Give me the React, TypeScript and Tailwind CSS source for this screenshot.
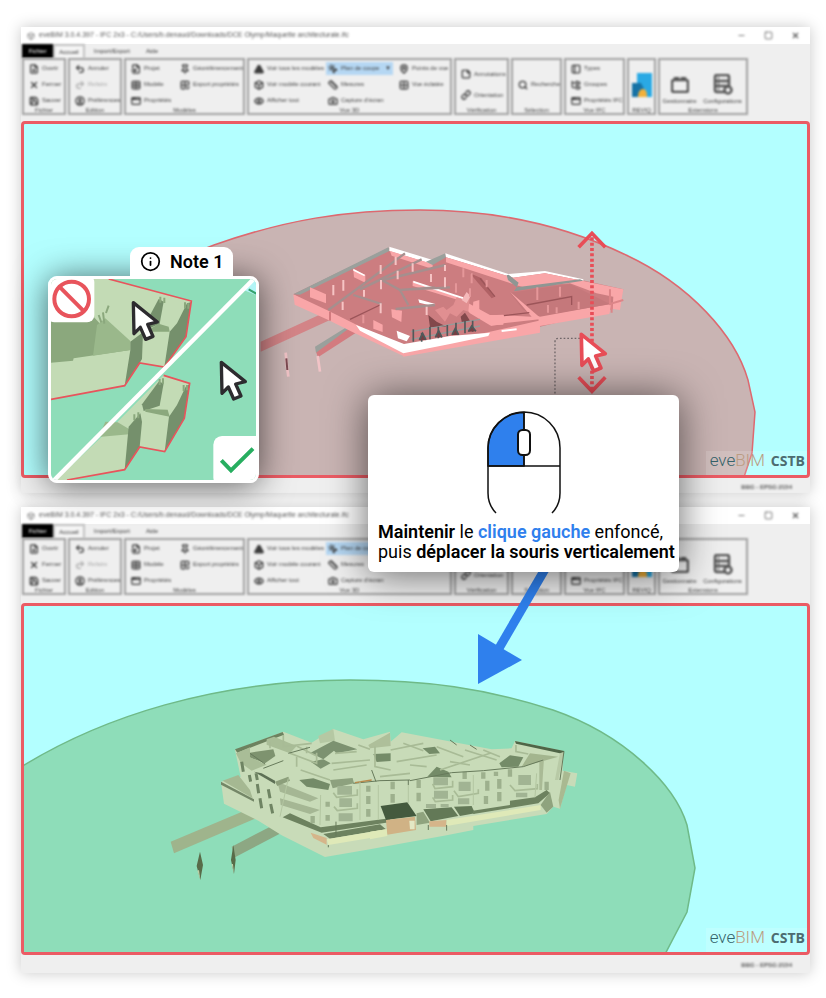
import type { ReactNode } from "react";
import {
  AppWindow, Box, Camera, CircleUser, Eye, FileInput, FilePlus, FolderTree, Info, Link,
  MapPin, Minus, MousePointerClick, PanelLeft, Redo2, Ruler, Save, Search, Square, StickyNote,
  Table, Triangle, Undo2, X, Grid2x2, Pin, Grid2x2Check,
} from "lucide-react";
import type { LucideIcon } from "lucide-react";

type Tool = { icon: LucideIcon; text: string; active?: boolean; muted?: boolean; solid?: boolean };
type Group = { name: string; width: string; columns: { width: string; tools: Tool[] }[] };

const groups: Group[] = [
  {
    name: "Fichier", width: "w-[44px]",
    columns: [{ width: "w-[37px]", tools: [{ icon: FilePlus, text: "Ouvrir" }, { icon: X, text: "Fermer" }, { icon: Save, text: "Sauver" }] }],
  },
  {
    name: "Edition", width: "w-[54px]",
    columns: [{ width: "w-[47px]", tools: [{ icon: Undo2, text: "Annuler" }, { icon: Redo2, text: "Refaire", muted: true }, { icon: CircleUser, text: "Préférences" }] }],
  },
  {
    name: "Modèles", width: "w-[121px]",
    columns: [
      { width: "w-[45px]", tools: [{ icon: FileInput, text: "Projet" }, { icon: Table, text: "Modèle" }, { icon: AppWindow, text: "Propriétés" }] },
      { width: "w-[65px]", tools: [{ icon: Pin, text: "Géoréférencement" }, { icon: Grid2x2Check, text: "Export propriétés" }] },
    ],
  },
  {
    name: "Vue 3D", width: "w-[205px]",
    columns: [
      { width: "w-[70px]", tools: [{ icon: Triangle, text: "Voir tous les modèles", solid: true }, { icon: Box, text: "Voir modèle courant" }, { icon: Eye, text: "Afficher tout" }] },
      { width: "w-[67px]", tools: [{ icon: MousePointerClick, text: "Plan de coupe", active: true }, { icon: Ruler, text: "Mesures" }, { icon: Camera, text: "Capture d'écran" }] },
      { width: "w-[52px]", tools: [{ icon: MapPin, text: "Points de vue" }, { icon: Grid2x2, text: "Vue éclatée" }] },
    ],
  },
  {
    name: "Vérification", width: "w-[55px]",
    columns: [{ width: "w-[48px]", tools: [{ icon: StickyNote, text: "Annotations" }, { icon: Link, text: "Orientation" }] }],
  },
  { name: "Sélection", width: "w-[51px]", columns: [{ width: "w-[44px]", tools: [{ icon: Search, text: "Recherche" }] }] },
  {
    name: "Vue IFC", width: "w-[61px]",
    columns: [{ width: "w-[54px]", tools: [{ icon: PanelLeft, text: "Types" }, { icon: FolderTree, text: "Groupes" }, { icon: AppWindow, text: "Propriétés IFC" }] }],
  },
];

function GroupFrame({ name, width, children }: { name: string; width: string; children: ReactNode }) {
  return (
    <section className={`${width} flex shrink-0 flex-col border-2 border-[#a2a2a2]`} aria-label={name}>
      <div className="flex h-[47px] gap-1 pt-[2px] pl-[3px]">{children}</div>
      <div className="text-center leading-[6px]">{name}</div>
    </section>
  );
}

function ToolButton({ icon: Icon, text, active, muted, solid }: Tool) {
  return (
    <button
      type="button"
      className={`flex h-[13px] w-full shrink-0 items-center gap-[3px] pl-[2px] text-left whitespace-nowrap ${active ? "bg-[#b5d7f3]" : ""} ${muted ? "text-[#aaaaaa]" : ""}`}
    >
      <Icon className="size-[10px] shrink-0" strokeWidth={3} fill={solid ? "currentColor" : "none"} />
      {text}
      {active && <span className="ml-auto pr-[2px]">▼</span>}
    </button>
  );
}

function Ribbon() {
  return (
    <div className="flex h-[57px] gap-[2px] pl-px text-[6px] text-[#3c3c3c] blur-[1px]">
      {groups.map((g) => (
        <GroupFrame key={g.name} name={g.name} width={g.width}>
          {g.columns.map((c, i) => (
            <div
              key={i}
              className={`${c.width} flex shrink-0 flex-col ${c.tools.length === 1 ? "justify-center" : c.tools.length === 2 && g.columns.length === 1 ? "justify-center gap-2" : "gap-[3px]"}`}
            >
              {c.tools.map((t) => <ToolButton key={t.text} {...t} />)}
            </div>
          ))}
        </GroupFrame>
      ))}
      <GroupFrame name="REVIQ" width="w-[29px]">
        <button type="button" aria-label="REVIQ" className="flex w-5 items-center">
          <svg viewBox="0 0 20 24" className="h-6 w-5">
            <path d="M5 0h15v24H5z" fill="#2aa9e4" />
            <path d="M0 10h9l3 6v8H0z" fill="#1672a5" />
            <path d="M6 24c0-5 2-8 5-8s4 3 4 8z" fill="#f3b13a" />
          </svg>
        </button>
      </GroupFrame>
      <GroupFrame name="Extensions" width="w-[90px]">
        <button type="button" className="flex w-[33px] flex-col items-center justify-end gap-1 whitespace-nowrap">
          <svg viewBox="0 0 18 16" className="h-4 w-[18px]" fill="none" stroke="#555" strokeWidth="2.500">
            <rect x="1" y="3" width="16" height="12" rx="2" />
            <path d="M4 3V1h3v2M11 3V1h3v2" />
          </svg>
          <span className="h-[10px]">Gestionnaire</span>
        </button>
        <button type="button" className="flex w-[45px] flex-col items-center justify-end gap-[2px] whitespace-nowrap">
          <svg viewBox="0 0 20 21" className="h-[21px] w-5" fill="none" stroke="#555" strokeWidth="2.500">
            <rect x="2" y="1" width="14" height="17" rx="2" />
            <path d="M2 7h14M2 12h14M5 4h1M5 9.500h1M5 15h1" />
            <circle cx="15" cy="16" r="3.500" fill="#efefef" />
          </svg>
          <span className="h-[10px]">Configurations</span>
        </button>
      </GroupFrame>
    </div>
  );
}

function AppFrame({ tall, children }: { tall?: boolean; children: ReactNode }) {
  return (
    <section className="bg-[#efefef] shadow-[0_0_14px_rgba(0,0,0,0.22)]">
      <header className="flex h-[17px] items-center bg-white px-[6px] text-[7px] text-[#555555]">
        <div className="flex flex-1 items-center gap-1 blur-[1px]">
          <Box className="size-2" />
          <span>eveBIM 3.0.4.397 - IFC 2x3 - C:/Users/b.denaud/Downloads/DCE Olymp/Maquette architecturale.ifc</span>
        </div>
        <div className="flex items-center gap-[18px] pr-1 blur-[1px]">
          <button type="button" aria-label="Réduire"><Minus className="size-[9px]" /></button>
          <button type="button" aria-label="Agrandir"><Square className="size-[9px]" /></button>
          <button type="button" aria-label="Fermer"><X className="size-[9px]" strokeWidth={3} /></button>
        </div>
      </header>
      <nav className="flex h-[14px] pl-px text-[6px] text-[#333333] blur-[1px]">
        <button type="button" className="w-[31px] bg-black text-white">Fichier</button>
        <button type="button" className="w-[32px] border-2 border-b-0 border-[#c2c2c2] bg-[#f5f5f5]">Accueil</button>
        <button type="button" className="w-[54px]">Import/Export</button>
        <button type="button" className="w-[26px]">Aide</button>
      </nav>
      <div className={tall ? "pb-2" : "pb-[6px]"}>
        <Ribbon />
      </div>
      <div className="relative rounded-sm border-3 border-[#eb5b64] bg-[#b3ffff]">
        {children}
        <div className="absolute right-0 bottom-0 flex h-[24px] items-center gap-[6px] bg-white/15 pr-[2px] pb-1 pl-1">
          <span className="font-['Roboto'] text-[17px] font-light text-[#35636b]">
            eve<span className="text-[#bb9c82]">BIM</span>
          </span>
          <span className="font-['Open_Sans'] text-sm font-bold text-[#4d6c70]">CSTB</span>
        </div>
      </div>
      <footer className={`${tall ? "h-[18px]" : "h-[15px]"} flex items-center justify-end pr-[18px] pt-[3px] text-[6px] font-bold text-[#555555]`}>
        <span className="blur-[1px]">BBG - EPSG:2154</span>
      </footer>
    </section>
  );
}

const CURSOR = "M0 0L72 58L43 65L59 101L37 110L21 74L2 93Z";

type Shape = [fill: string, points: string];

function Shapes({ items }: { items: Shape[] }) {
  return <>{items.map(([fill, points], i) => <polygon key={i} fill={fill} points={points} />)}</>;
}

const sectionWalls: Shape[] = [
  ["#d38487", "32,425 235,332 240,360 32,455"],
  ["#d37b7f", "198,455 312,372 318,398 204,472"],
  ["#9aa09c", "195,440 300,375 315,372 198,458"],
  ["#cc7d80", "130,283 420,142 548,188 588,162 775,228 885,216 1120,268 1100,325 870,380 460,455 300,380"],
  ["#f9a6a8", "130,283 235,332 315,372 460,440 460,468 315,400 235,360 134,314"],
  ["#f9a6a8", "455,440 700,400 866,362 865,348 1085,312 1078,342 870,378 870,398 460,470"],
  ["#ffffff", "318,375 462,432 600,408 720,398 715,408 600,432 460,460 330,392"],
  ["#9aa09c", "130,283 415,142 420,152 150,284"],
  ["#ffffff", "418,140 548,180 548,193 418,153"],
  ["#f9a6a8", "420,153 548,192 548,207 425,167"],
  ["#9aa09c", "528,185 586,160 588,172 548,195"],
  ["#ffffff", "586,160 775,222 885,213 1000,238 1000,243 885,220 790,233 588,172"],
  ["#f9a6a8", "588,172 790,233 885,220 1000,243 1120,268 1110,330 1088,327 1090,290 1040,280 960,250 820,262 588,187"],
  ["#8f9693", "770,226 776,224 806,248 800,262 990,238 1000,242 792,274 800,262 774,240"],
  ["#c5787b", "780,278 960,252 1080,312 870,350 820,330"],
  ["#f9a6a8", "780,275 875,357 760,370 760,374 720,376 660,340 625,300 488,258 488,243 620,290 720,345 760,346 845,350"],
  ["#ffffff", "490,242 640,292 640,298 490,248"],
  ["#f9a6a8", "180,262 228,283 228,310 180,292"],
  ["#f9a6a8", "310,208 346,225 346,248 312,232"],
  ["#ffffff", "310,206 346,225 342,228 310,212"],
  ["#f9a6a8", "424,328 456,332 454,366 426,352"],
  ["#f9a6a8", "370,360 398,374 398,396 370,386"],
  ["#f9a6a8", "670,305 688,300 688,335 668,330"],
  ["#f9a6a8", "720,346 760,344 760,372 722,378"],
  ["#ffffff", "505,298 556,312 548,318 508,308"],
  ["#ffffff", "440,392 480,408 470,424 444,415"],
  ["#b06265", "660,220 695,235 735,290 725,295 685,250"],
  ["#e18f91", "555,330 580,320 590,330 610,315 620,292 640,300 660,285 655,335 640,330 620,350 600,340 585,365"],
  ["#f5b9ba", "635,300 650,276 662,288 650,310"],
  ["#82484b", "535,345 560,365 590,380 540,382"],
  ["#82484b", "632,350 645,338 660,362 636,368"],
];

function CutScene() {
  return (
    <svg viewBox="24 124 783 351" className="block w-full" role="img" aria-label="Maquette coupée">
      <path
        d="M58 480C78 350 130 275 214 245C285 220 345 210 420 210C505 210 570 228 626 255C690 285 735 335 748 380L755 412L752 453L743 480Z"
        fill="#c9b4b3" stroke="#dd6970" strokeWidth="1.500"
      />
      <g transform="translate(250 200) scale(0.3333)">
        <Shapes items={sectionWalls} />
        <g stroke="#a58f8e" strokeWidth="7" fill="none">
          <path d="M235 330L465 160M330 268L515 178M400 240L586 195M395 240L450 270L555 262M450 270L475 315M310 285L395 312M437 327L555 315M330 268L390 240M485 268L600 262" />
          <path d="M300 358L390 315M830 315L965 290V315M762 347L838 338M690 235L735 290" stroke="#9c5559" strokeWidth="4" />
        </g>
        <g stroke="#fff" strokeWidth="6">
          <path d="M437 170V195M488 190V215M392 195V222M443 212V238M393 240V268M543 222V246M585 232V262M280 240V272M250 255V286M342 270V290M278 305V330M392 310V340M585 195V213M530 320V345" stroke="#f6c4c4" />
          <path d="M640 205V232M665 220V250M710 240V262M618 250V278M660 265V290M862 262V300M930 260V290M894 315V338M920 322V340M986 305V328M340 345V370" stroke="#e59799" />
          <path d="M240 335V362" stroke="#d37b7f" />
        </g>
        <g stroke="#50595a" strokeWidth="5">
          <path d="M484 395L690 358M484 418L690 378" stroke="#959b9a" strokeWidth="4" />
          <path d="M490 388V425M515 398V425M540 380V418M565 380V415M592 375V408M618 368V405M645 362V400M668 362V395" />
          <path d="M508 420L518 400L528 420M556 412L566 392L576 412M606 405L616 385L626 405M655 395L665 378L678 394" fill="#753f43" />
        </g>
        <path d="M755 393L800 388" stroke="#fff" strokeWidth="6" />
        <path d="M1080 268V312L1120 300M1085 312V338" stroke="#dc8588" strokeWidth="6" fill="none" />
        <path d="M107 458L111 500L115 530M203 468L210 515" stroke="#f1c3c6" strokeWidth="8" />
        <path d="M109 475L112 510" stroke="#7c4b52" strokeWidth="6" />
        <path d="M990 415H925Q915 415 915 427V590" stroke="#6f6668" strokeWidth="4" strokeDasharray="5 6" fill="none" />
        <path d="M1026 112V570" stroke="#e84d57" strokeWidth="11" strokeDasharray="9 7" />
        <path d="M986 142L1026 100L1066 142M986 532L1026 574L1066 532" stroke="#e84d57" strokeWidth="11" fill="none" />
        <path d={CURSOR} transform="translate(994 403)" fill="#fff" stroke="#e84d57" strokeWidth="11" strokeLinejoin="round" />
      </g>
    </svg>
  );
}

const facade: Shape[] = [
  ["#9fb48c", "62,395 312,290 318,325 72,430"],
  ["#8da783", "245,410 390,335 395,368 255,442"],
  ["#c8dbb8", "213,215 272,200 255,120 400,65 485,98 550,57 640,88 720,65 722,95 755,67 905,95 1025,118 1085,115 1095,93 1240,123 1238,182 1282,190 1275,230 1250,225 1230,296 1210,290 1190,312 970,348 970,360 890,376 660,418 525,441 395,376 325,332 222,281"],
  ["#a5b892", "218,212 265,195 300,240 308,265"],
  ["#748767", "213,215 312,268 312,275 213,224"],
  ["#7e936f", "300,128 370,118 376,138 345,160 298,142"],
  ["#6d825f", "255,118 398,66 402,74 262,128"],
  ["#a9bd97", "258,130 300,112 300,142 350,164 305,182 272,158"],
  ["#a9bd97", "350,88 372,80 440,108 420,130 350,104"],
  ["#b5c8a3", "505,78 550,57 555,92 510,100"],
  ["#7c9270", "482,128 550,92 622,118 560,130 552,122 520,148"],
  ["#7c9270", "482,155 520,148 542,160 512,176"],
  ["#aebf9a", "655,105 720,68 722,108 660,115"],
  ["#748b68", "670,132 722,130 722,153 680,156"],
  ["#748b68", "818,115 855,110 870,130 838,132"],
  ["#748b68", "832,200 860,170 895,185 905,202"],
  ["#748b68", "1048,160 1080,136 1120,142 1105,170 1055,172"],
  ["#748b68", "448,210 490,205 540,222 535,240 470,230"],
  ["#8da17e", "540,210 608,204 612,220 548,235"],
  ["#4f6547", "1095,93 1243,123 1240,132 1098,101"],
  ["#a3b58e", "1140,130 1225,140 1172,155 1115,170"],
  ["#a5b794", "382,215 505,265 480,275 390,245"],
  ["#a5b794", "390,265 510,300 480,312 392,285"],
  ["#5d7055", "312,185 375,222 375,212 335,190"],
  ["#8c9f7b", "375,215 415,200 420,212 382,228"],
  ["#6d825f", "398,322 420,310 512,352 720,325 722,336 515,368"],
  ["#6d825f", "520,372 690,343 708,358 540,386"],
  ["#dfe9b8", "530,388 710,358 710,376 535,405"],
  ["#d5b58a", "482,368 530,384 530,404 490,384"],
  ["#445a3e", "692,288 772,277 800,318 708,330"],
  ["#d0b285", "708,330 795,320 798,360 712,374"],
  ["#dfe9b8", "660,365 710,358 712,378 660,388"],
  ["#637957", "820,298 905,292 925,318 842,334"],
  ["#637957", "912,290 965,288 975,310 930,318"],
  ["#8fa37e", "800,310 820,305 840,338 800,345"],
  ["#d5b58a", "838,334 890,330 888,350 838,350"],
  ["#dfe9b8", "890,330 1172,285 1172,300 890,348"],
  ["#6d825f", "968,302 1080,285 1080,272 1155,262 1190,240 1200,250 1165,280 970,312"],
  ["#a9ba95", "1168,150 1182,145 1176,240 1168,240"],
  ["#b8caa6", "1230,130 1242,125 1225,210 1215,210"],
  ["#8fa37e", "1172,285 1200,245 1210,290 1190,308"],
  ["#a9b991", "1242,182 1262,190 1230,296 1226,270"],
];

function GreenScene() {
  return (
    <svg viewBox="24 606 783 346" className="block w-full" role="img" aria-label="Maquette complète">
      <path
        d="M10 774C100 715 220 680 350 680C425 680 485 688 553 710C625 735 675 785 687 825L695 868L687 912L662 960H10Z"
        fill="#8eddb9" stroke="#6fba88" strokeWidth="1.500"
      />
      <g transform="translate(150 710) scale(0.3333)">
        <Shapes items={facade} />
        <g stroke="#6f8463" strokeWidth="9">
          <path d="M275 155L280 185M298 195L302 215M322 222L326 250M355 238L360 265M330 265L335 295M362 282L368 310M318 190L322 210" />
        </g>
        <g stroke="#9db08d" strokeWidth="13">
          <path d="M655 227V245M655 258V282M655 297V320M728 215V238M728 252V278M806 210V234M806 248V274M944 185V207M1000 187V206M1012 212V242M1048 207V236M1048 246V274M1080 178V200M1038 185V198M1190 215V240M533 275V290M533 315V332M488 318V340M1008 258V282" />
        </g>
        <g fill="#a1b493">
          <path d="M562 228h44v26h-44zM568 265h38v26h-38zM566 310h42v24h-42zM850 202h44v24h-44zM852 242h42v24h-42zM926 215h36v28h-36zM924 265h34v18h-34zM1105 195h38v30h-38zM1098 248h34v14h-34zM828 282h30v12h-30zM872 282h24v10h-24z" />
        </g>
        <g stroke="#a8bb96" strokeWidth="5" fill="none">
          <path d="M550 248L560 262L622 255V238M552 290L562 302L622 295V280M848 222L855 236L908 230V212M848 262L856 275L908 270V255M912 242L925 260L985 250V238M1080 225L1095 242L1162 236V222" />
          <path d="M400 75V110L485 100M420 130L500 160V128M360 95V115M440 108L500 138M452 180L540 210M545 160L660 150M550 180L650 165M675 110V170L722 180M722 120L820 100M740 155L860 135M870 180L1020 130M900 155L960 165M1000 120L1050 140M1098 105V125L1135 132M625 105L660 118" />
          <path d="M555 130L620 125M440 140L440 170M470 110L470 130M760 100L820 122M780 165L830 170M945 120L1040 150M860 110L940 140M690 200L780 190" />
        </g>
        <g stroke="#66795a" strokeWidth="3" fill="none">
          <path d="M610 220L690 212L780 210M780 212L905 188L1000 182L1120 170L1180 150M900 90L920 105M960 105L980 118M1242 125L1230 210M415 130L480 112M340 175L400 152M300 130L345 162M665 180L678 215M775 210V225M558 335V380M535 405V412M835 345V360M890 345V362" />
          <path d="M615 218L665 210" stroke="#b98a4b" strokeWidth="4" />
          <path d="M778 332h16v26h-14z" fill="#e3e8c4" stroke="none" />
          <path d="M685 225V330M775 225V280M970 195V285M1160 190L1155 262M415 205L390 320M512 255L510 345M630 215V330" stroke="#b3c6a1" />
        </g>
        <path d="M150 425L159 465L151 510L140 468ZM250 405L257 450L252 492L243 450Z" fill="#586b49" />
        <path d="M142 482L151 510L147 480ZM245 462L252 492L249 462Z" fill="#bccfa6" />
      </g>
    </svg>
  );
}

const noteUpper: Shape[] = [
  ["#c3dbb5", "50,120 235,132 483,198 467,305 402,396 328,384 283,452 50,495"],
  ["#8ba87d", "50,252 185,240 205,262 300,345 130,370 128,377 50,384"],
  ["#9ab88b", "200,270 225,250 300,318 300,345 188,362"],
  ["#75906c", "300,320 338,292 335,372 328,384 283,452 300,345"],
  ["#75906c", "385,192 400,200 388,266 345,286 340,276"],
  ["#8ba87d", "385,266 415,275 418,290 345,290"],
  ["#75906c", "470,205 482,202 467,305 402,396 418,290 440,265"],
];
const noteLower: Shape[] = [
  ["#c3dbb5", "262,560 400,421 478,445 462,550 403,650 328,636 283,704 100,740 72,740"],
  ["#9ab88b", "225,560 262,562 296,582 296,598 205,606"],
  ["#75906c", "295,575 330,535 335,560 328,636 283,704"],
  ["#75906c", "385,440 400,445 388,512 340,528 335,508"],
  ["#8ba87d", "345,522 412,524 418,545 345,530"],
  ["#75906c", "466,455 478,447 462,550 403,650 416,545 440,510"],
];

function NoteCard() {
  return (
    <aside className="absolute top-[247px] left-[48px] w-[211px]">
      <div className="absolute inset-x-0 top-[29px] bottom-0 rounded-[9px] shadow-[0_2px_34px_rgba(0,0,0,0.62)]" />
      <h2 className="relative ml-[82px] flex h-[29px] w-[103px] items-center gap-[9px] rounded-t-[9px] bg-white pl-[10px] font-['Roboto'] text-lg font-semibold whitespace-nowrap text-black">
        <Info className="size-[21px] shrink-0" strokeWidth={2} />
        Note 1
      </h2>
      <div className="relative rounded-[9px] bg-white p-[3px]">
        <svg viewBox="62 132 615 603" className="block w-full rounded-[6px]" role="img" aria-label="Placement du pointeur">
          <path d="M50 120H700V750H50Z" fill="#8eddb9" />
          <path d="M640 165L690 120V185Z" fill="#b3f5f7" />
          <path d="M655 163L685 180" stroke="#36a36c" strokeWidth="6" />
          <Shapes items={noteUpper} />
          <path d="M235 132L483 198L467 305L402 396L328 384L283 452L62 493" fill="none" stroke="#e8545c" strokeWidth="5" />
          <path d="M390 185v18M402 188v16M464 202v18M474 205v16M205 240l8 22M218 232l4 34M235 212l-8 22" stroke="#8ba87d" strokeWidth="6" />
          <Shapes items={noteLower} />
          <path d="M400 421L478 445L462 550L403 650L328 636L283 704L110 735" fill="none" stroke="#e8545c" strokeWidth="5" />
          <path d="M388 432v18M398 430v16M460 450v18M470 450v16M312 538v18M324 532v18" stroke="#8ba87d" strokeWidth="6" />
          <path d="M62 745L674 128" stroke="#fff" strokeWidth="13" />
          <rect x="50" y="120" width="142" height="142" rx="22" fill="#fff" />
          <g stroke="#e8545c" strokeWidth="12" fill="none">
            <circle cx="124" cy="192" r="52" />
            <path d="M87 155L161 229" />
          </g>
          <rect x="549" y="603" width="150" height="150" rx="26" fill="#fff" />
          <path d="M573 676L602 706L668 641" fill="none" stroke="#27ae60" strokeWidth="12" />
          <path d={CURSOR} transform="translate(309 203)" fill="#fff" stroke="#2d2b2f" strokeWidth="10" strokeLinejoin="round" />
          <path d={CURSOR} transform="translate(573 382)" fill="#fff" stroke="#2d2b2f" strokeWidth="10" strokeLinejoin="round" />
        </svg>
      </div>
    </aside>
  );
}

function InstructionCard() {
  return (
    <aside className="absolute top-[395px] left-[368px] w-[311px] rounded-md bg-white pt-4 pb-[10px] font-['Roboto'] text-lg leading-5 text-black shadow-[0_2px_40px_rgba(0,0,0,0.6)]">
      <svg viewBox="0 0 76 104" className="mx-auto h-[104px] w-[76px]" fill="none" stroke="#111" strokeWidth="1.500" role="img" aria-label="Souris, bouton gauche">
        <path d="M38 1.500A36 36 0 0 0 2 37V55H38Z" fill="#2f80ed" />
        <path d="M10 102C4 96 2 90 2 82V37A36 36 0 0 1 74 37V82C74 90 72 96 66 102M2 55H74M38 1V55" />
        <rect x="32" y="19" width="12" height="25" rx="4.500" fill="#fff" strokeWidth="2" />
      </svg>
      <p className="mt-[7px] pl-[10px] whitespace-nowrap">
        <b className="font-semibold">Maintenir</b> le <b className="font-semibold text-[#2f80ed]">clique gauche</b> enfoncé,
        <br />
        puis <b className="font-semibold">déplacer la souris verticalement</b>
      </p>
    </aside>
  );
}

export default function App() {
  return (
    <main className="relative flex flex-col gap-[14px] overflow-hidden bg-white pt-[27px] pr-4 pb-[25px] pl-[21px] font-['Liberation_Sans',sans-serif]">
      <AppFrame><CutScene /></AppFrame>
      <AppFrame tall><GreenScene /></AppFrame>
      <svg viewBox="0 0 80 124" className="absolute top-[560px] left-[474px] h-[124px] w-[80px]" aria-hidden="true">
        <path d="M74 4L24 90" stroke="#2f80ed" strokeWidth="9" />
        <path d="M4 74L48 100L4 124Z" fill="#2f80ed" />
      </svg>
      <NoteCard />
      <InstructionCard />
    </main>
  );
}
